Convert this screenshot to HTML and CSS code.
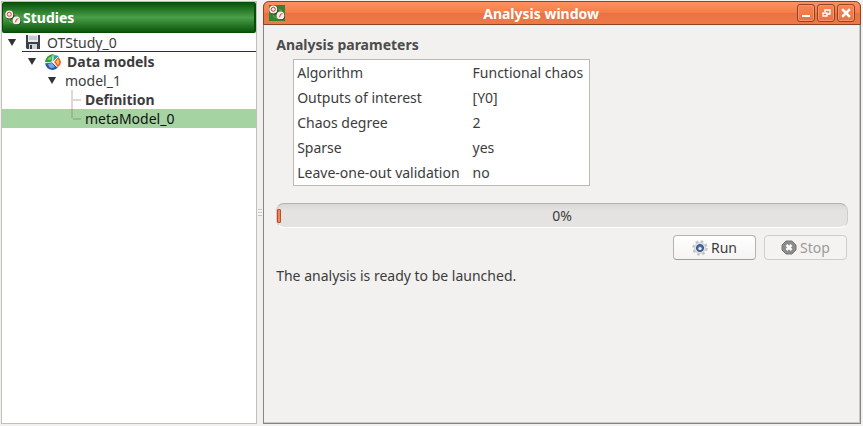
FILE: index.html
```html
<!DOCTYPE html>
<html lang="en">
<head>
<meta charset="utf-8">
<title>Analysis window</title>
<link rel="stylesheet" href="styles.css">
</head>
<body>
<svg class="defs" aria-hidden="true">
  <symbol id="logo" viewBox="0 0 16 16">
    <path d="M4 9q0 4 4 4M9 4q4 0 4 4" fill="none" stroke="#b79a6c" stroke-width=".6"/>
    <circle cx="5" cy="5.300" r="4.300" fill="#173c12"/>
    <circle cx="4.300" cy="4.500" r="4" fill="#f4eee6"/>
    <circle cx="4.300" cy="4.300" r="2" fill="none" stroke="#d23a3a"/>
    <circle cx="12" cy="11" r="4" fill="#173c12"/>
    <circle cx="11.500" cy="10.400" r="3.900" fill="#f4eee6"/>
    <path d="M10.500 12.300l1-3 2-.6" fill="none" stroke="#d23a3a"/>
  </symbol>
</svg>
<main class="app">
  <aside class="dock">
    <h2 class="dock-title"><svg class="icon"><use href="#logo"/></svg>Studies</h2>
    <ul class="tree">
      <li>
        <div class="row study"><i class="arrow"></i><span class="name">
          <svg class="icon" viewBox="0 0 16 16"><path d="M1 1h14v14H2l-1-1z" fill="#3c4148"/><path d="M3 1h10v7H3z" fill="#e9ebed"/><path d="M4 3h8M4 5h8" stroke="#a8adb3"/><path d="M4 10h8v5H4z" fill="#cfd3d6"/><path d="M5 11h2v4H5z" fill="#34383d"/></svg>OTStudy_0</span></div>
        <ul>
          <li>
            <div class="row bold"><i class="arrow"></i><span class="name">
              <svg class="icon" viewBox="0 0 16 16"><path d="M0 8q1-7 8-8l1 1-2 7z" fill="#2f9b35"/><path d="M2 6q1-3 5-4L6 6z" fill="#72cf65"/><path d="M7 8L0 9q1 6 7 7 4 0 6-3z" fill="#2c5ba5"/><path d="M7 9l-4 1q1 4 4 4l3-1z" fill="#7fa5dc"/><path d="M8 7l1-6q4 0 5 2z" fill="#34a5a3"/><path d="M9 8l4-5q3 2 3 5t-3 5z" fill="#e46c20"/><path d="M11 8l2-3q2 3 0 6z" fill="#ffc078"/><path d="M8 1L7 8l5 5M7 8L0 9M8 8l5-5" fill="none" stroke="#f6f6f0" stroke-width=".8"/></svg>Data models</span></div>
            <ul>
              <li>
                <div class="row model"><i class="arrow"></i><span class="name">model_1</span></div>
                <ul class="leaves">
                  <li class="row leaf bold"><i class="branch"></i>Definition</li>
                  <li class="row leaf selected"><i class="branch last"></i>metaModel_0</li>
                </ul>
              </li>
            </ul>
          </li>
        </ul>
      </li>
    </ul>
  </aside>
  <div class="splitter"><i class="grip"></i></div>
  <section class="window">
    <header class="titlebar">
      <svg class="icon logo"><use href="#logo"/></svg>
      <h1>Analysis window</h1>
      <div class="controls">
        <button type="button" aria-label="Minimize"><svg viewBox="0 0 10 10"><path d="M1 7h8v2H1z" fill="#fff"/></svg></button>
        <button type="button" aria-label="Restore"><svg viewBox="0 0 10 10"><path d="M4 4V2h5v4H6M4 2h5M2 5h4v3H2zM2 5h4" fill="none" stroke="#fff" stroke-width="1.400"/></svg></button>
        <button type="button" aria-label="Close"><svg viewBox="0 0 10 10"><path d="M2 2l6 6M8 2L2 8" stroke="#fff" stroke-width="2.500" stroke-linecap="square"/></svg></button>
      </div>
    </header>
    <div class="content">
      <h3>Analysis parameters</h3>
      <table>
        <tbody>
          <tr><th scope="row">Algorithm</th><td>Functional chaos</td></tr>
          <tr><th scope="row">Outputs of interest</th><td>[Y0]</td></tr>
          <tr><th scope="row">Chaos degree</th><td>2</td></tr>
          <tr><th scope="row">Sparse</th><td>yes</td></tr>
          <tr><th scope="row">Leave-one-out validation</th><td>no</td></tr>
        </tbody>
      </table>
      <div class="progress" role="progressbar" aria-label="Progress" aria-valuenow="0" aria-valuemin="0" aria-valuemax="100"><i class="chunk"></i><span>0%</span></div>
      <div class="actions">
        <button type="button"><svg class="icon" viewBox="0 0 16 16"><circle cx="8" cy="8" r="6.500" fill="none" stroke="#c3c5c6" stroke-width="2.500" stroke-dasharray="2.600 2.500"/><circle cx="8" cy="8" r="5.500" fill="#e2e3e4" stroke="#c3c5c7" stroke-width=".7"/><circle cx="8" cy="8" r="3.500" fill="#4a70a9" stroke="#2c477c"/><circle cx="8" cy="8.500" r="1.600" fill="#eef3fa"/></svg>Run</button>
        <button type="button" disabled><svg class="icon" viewBox="0 0 16 16"><path d="M5 1h6l4 4v5l-4 4H5l-4-4V5z" fill="#8c8c8c" stroke="#777"/><path d="M5.500 5l5 5M10.500 5l-5 5" stroke="#fff" stroke-width="2.500"/></svg>Stop</button>
      </div>
      <p class="status">The analysis is ready to be launched.</p>
    </div>
  </section>
</main>
</body>
</html>
```

FILE: styles.css
```css
* { box-sizing: border-box; }

body {
  margin: 0;
  background: #f2f1f0;
  color: #3c3c3c;
  font: 14px/19px "Noto Sans", "Open Sans", sans-serif;
}

h1, h2, h3, p, ul { margin: 0; padding: 0; font-size: 14px; }
ul { list-style: none; }
button { font: inherit; color: inherit; padding: 0; }
.defs { position: absolute; width: 0; height: 0; }
.icon { width: 16px; height: 16px; flex: none; }

.app {
  display: grid;
  grid-template-columns: minmax(0, 3fr) 6px minmax(0, 7fr);
  height: 100vh;
  padding: 1px 2px 2px 1px;
}

.dock {
  background: #fff;
  border: 1px solid #c0bfbc;
}
.dock-title {
  display: flex;
  align-items: center;
  gap: 2px;
  height: 31px;
  padding-left: 2px;
  color: #fff;
  background: linear-gradient(#0a540a, #4a9f49 50%, #0a540a);
  border: 1px solid #064e06;
  border-right-width: 2px;
  border-radius: 2px;
}

.row { display: flex; align-items: center; height: 19px; }
.bold { font-weight: bold; }
.tree > li > .row { padding-left: 4px; }
.tree > li > ul > li > .row { padding-left: 24px; }
.tree > li > ul ul .row { padding-left: 44px; }
.arrow {
  width: 12px;
  height: 7px;
  background: #333;
  background-clip: content-box;
  padding: 0 2px;
  clip-path: polygon(16% 0, 84% 0, 50% 100%);
  margin-right: 4px;
}
.name { display: flex; align-items: center; gap: 6px; flex: 1; height: 100%; }
.study .name { border-bottom: 1px solid #064e06; padding-left: 3px; }
.bold .name, .model .name { padding-left: 3px; }
.tree > li > ul ul .leaf { padding-left: 69px; }
.leaf { gap: 4px; }
.branch { width: 10px; height: 100%; border-left: 2px solid rgb(120 100 80 / .25); }
.branch::after { content: ""; display: block; height: 9px; border-bottom: 2px solid rgb(120 100 80 / .25); }
.branch.last { height: 9px; align-self: flex-start; }
.selected { background: #a5d3a1; color: #111; }

.splitter { display: grid; place-items: center; }
.grip {
  width: 4px;
  height: 7px;
  background: repeating-linear-gradient(#c5c3c0 0 1px, #fff 1px 2px, transparent 2px 3px);
}

.window {
  background: #f2f1f0;
  border: 1px solid #858585;
  border-top: 0;
  border-radius: 6px 6px 0 0;
  box-shadow: inset -1px -1px #cac9c7;
}
.titlebar {
  display: flex;
  align-items: center;
  justify-content: space-between;
  height: 24px;
  margin: 0 -1px;
  padding: 0 5px;
  color: #fff;
  border: 1px solid #8a4528;
  border-radius: 6px 6px 0 0;
  background: linear-gradient(#ff9160, #f57d49 48%, #e97242 52%, #ee7947);
}
.logo { background: #348331; }
.titlebar h1 { flex: 1; text-align: center; }
.controls { display: flex; gap: 2px; }
.controls button {
  display: grid;
  place-items: center;
  width: 18px;
  height: 18px;
  border: 1px solid #8a4528;
  border-radius: 3px;
  background: linear-gradient(#fb8350, #e97242);
  box-shadow: inset 0 0 0 1px #ff9468;
}
.controls svg { width: 10px; height: 10px; }

.content { padding: 10px 12px; }
h3 { color: #4c4c4c; }
table {
  margin: 5px 17px 17px;
  background: #fff;
  border: 1px solid #bbb9b6;
  border-spacing: 0;
}
th, td { height: 25px; padding: 0 6px 0 3px; font-weight: normal; text-align: left; }
th { padding-right: 10px; }
.progress {
  display: flex;
  align-items: center;
  height: 25px;
  border: 1px solid #cfcdca;
  border-top-color: #b5b3b0;
  border-bottom-color: #fff;
  border-radius: 8px;
  background: linear-gradient(#dad8d6, #e4e3e1 30%);
}
.chunk { width: 4px; height: 14px; border: 1px solid #b7502a; border-radius: 1px; background: #f58355; }
.progress span { flex: 1; padding-right: 4px; text-align: center; }
.actions { display: flex; justify-content: flex-end; gap: 8px; padding: 7px 1px 6px; }
.actions button {
  display: flex;
  align-items: center;
  justify-content: center;
  gap: 3px;
  width: 83px;
  height: 25px;
  border: 1px solid #b5b3b0;
  border-bottom-color: #a09e9b;
  border-radius: 4px;
  background: linear-gradient(#fff, #f4f3f2);
}
.actions button:disabled { color: #9a9a9a; border-color: #cfcdca; background: #f4f3f2; }
```
